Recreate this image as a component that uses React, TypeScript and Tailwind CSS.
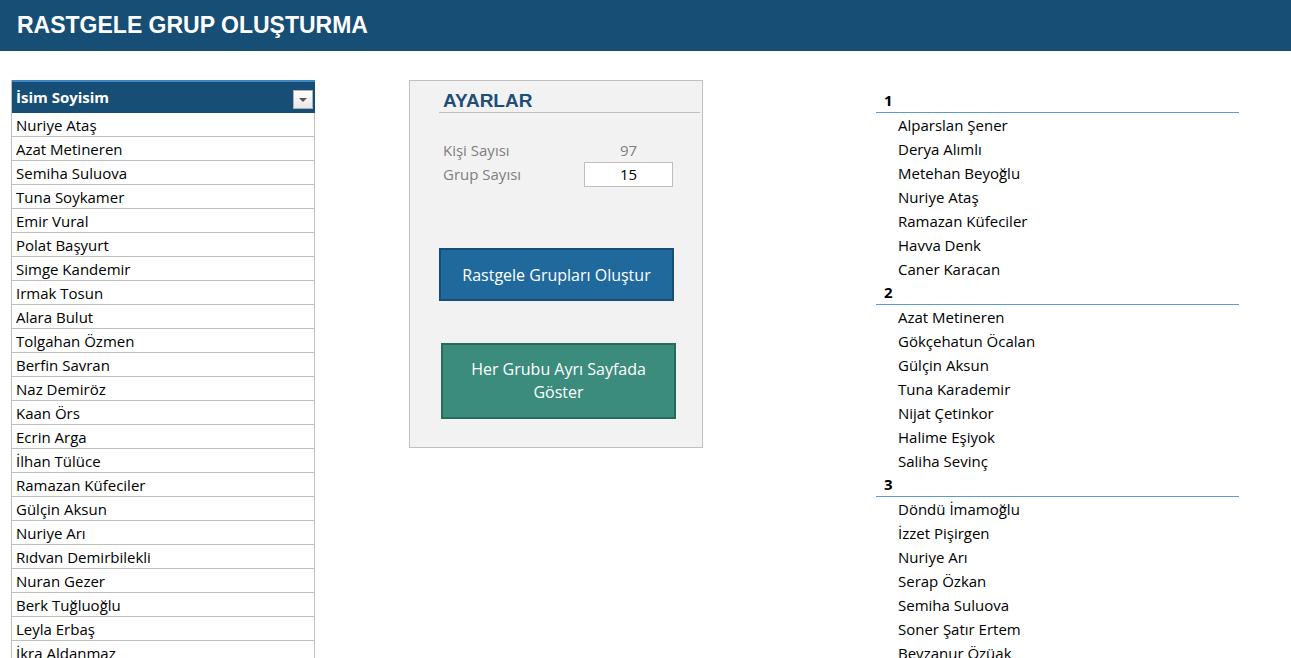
import React from 'react';

const names = [
  'Nuriye Ataş', 'Azat Metineren', 'Semiha Suluova', 'Tuna Soykamer', 'Emir Vural',
  'Polat Başyurt', 'Simge Kandemir', 'Irmak Tosun', 'Alara Bulut', 'Tolgahan Özmen',
  'Berfin Savran', 'Naz Demiröz', 'Kaan Örs', 'Ecrin Arga', 'İlhan Tülüce',
  'Ramazan Küfeciler', 'Gülçin Aksun', 'Nuriye Arı', 'Rıdvan Demirbilekli', 'Nuran Gezer',
  'Berk Tuğluoğlu', 'Leyla Erbaş', 'İkra Aldanmaz',
];

const groups = [
  { no: 1, members: ['Alparslan Şener', 'Derya Alımlı', 'Metehan Beyoğlu', 'Nuriye Ataş', 'Ramazan Küfeciler', 'Havva Denk', 'Caner Karacan'] },
  { no: 2, members: ['Azat Metineren', 'Gökçehatun Öcalan', 'Gülçin Aksun', 'Tuna Karademir', 'Nijat Çetinkor', 'Halime Eşiyok', 'Saliha Sevinç'] },
  { no: 3, members: ['Döndü İmamoğlu', 'İzzet Pişirgen', 'Nuriye Arı', 'Serap Özkan', 'Semiha Suluova', 'Soner Şatır Ertem', 'Beyzanur Özüak'] },
];

const App: React.FC = () => {
  return (
    <div className="h-[658px] overflow-hidden bg-white font-['Open_Sans',sans-serif] text-[15px] text-black">
      {/* Title bar */}
      <header className="h-[51px] bg-[#174e76] flex items-center pl-[17px]">
        <h1 className="font-['Liberation_Sans',Arial,sans-serif] font-bold text-[23px] text-white">
          RASTGELE GRUP OLUŞTURMA
        </h1>
      </header>

      <div className="flex items-start pt-[29px]">
        {/* Name table */}
        <div className="ml-[11px] w-[304px] border-l border-[#bfbfbf]">
          <div className="h-[33px] bg-[#174e76] border-t-2 border-[#3d87c4] flex items-center justify-between pl-[4px] pr-[2px]">
            <span className="font-bold text-white">İsim Soyisim</span>
            <div className="w-[20px] h-[19px] mt-[4px] bg-gradient-to-b from-white to-[#e8e8e8] border border-[#b0b0b0] flex items-center justify-center">
              <svg width="8" height="4" viewBox="0 0 8 4">
                <path d="M0 0h8L4 4z" fill="#555" />
              </svg>
            </div>
          </div>
          {names.map((n) => (
            <div key={n} className="h-[24px] border-b border-r border-[#bfbfbf] flex items-center pl-[4px] pt-[1px] leading-none">
              {n}
            </div>
          ))}
        </div>

        {/* Settings panel */}
        <div className="ml-[94px] w-[294px] h-[368px] bg-[#f2f2f2] border border-[#bfbfbf] pt-[10px] pl-[29px] pr-[2px]">
          <div className="border-b border-[#bfbfbf] pl-[4px] pb-[1px]">
            <h2 className="font-['Liberation_Sans',Arial,sans-serif] font-bold text-[19px] leading-[20px] text-[#1f4e79]">AYARLAR</h2>
          </div>
          <div className="mt-[25px] pl-[4px] text-[#7f7f7f]">
            <div className="h-[24px] flex items-center">
              <span className="w-[141px]">Kişi Sayısı</span>
              <span className="w-[89px] text-center">97</span>
            </div>
            <div className="h-[24px] flex items-center">
              <span className="w-[141px]">Grup Sayısı</span>
              <span className="w-[89px] h-[25px] bg-white border border-[#bfbfbf] text-black flex items-center justify-center">15</span>
            </div>
          </div>
          <button className="mt-[62px] w-[235px] h-[53px] bg-[#1f699d] border-2 border-[#174e76] text-white text-[16px]">
            Rastgele Grupları Oluştur
          </button>
          <button className="mt-[42px] ml-[2px] w-[235px] h-[76px] bg-[#3b8c7c] border-2 border-[#276b5d] text-white text-[16px] leading-[23px] px-[20px]">
            Her Grubu Ayrı Sayfada Göster
          </button>
        </div>

        {/* Groups */}
        <div className="ml-[173px] mt-[9px] w-[363px]">
          {groups.map((g) => (
            <div key={g.no}>
              <div className="h-[24px] border-b border-[#5b9bd5] flex items-center pl-[8px] font-bold">{g.no}</div>
              {g.members.map((m) => (
                <div key={m} className="h-[24px] flex items-center pl-[22px]">
                  {m}
                </div>
              ))}
            </div>
          ))}
        </div>
      </div>
    </div>
  );
};

export default App;
